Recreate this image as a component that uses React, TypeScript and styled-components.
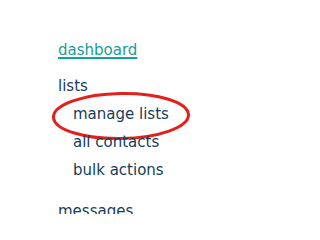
import React from 'react';
import styled, {createGlobalStyle} from 'styled-components';

const GlobalStyle = createGlobalStyle`
    html, body {
        margin: 0;
        padding: 0;
        background: #ffffff;
    }
    body {
        font-family: "DejaVu Sans", "Liberation Sans", sans-serif;
    }
`;

const Nav = styled.nav`
    width: 254px;
    height: 214px;
    overflow: hidden;
    box-sizing: border-box;
    padding: 36px 0 0 58px;
    font-size: 15px;
    line-height: 28px;
    color: #173d56;
`;

const Section = styled.div<{$gap: number}>`
    display: flex;
    flex-direction: column;
    margin-bottom: ${(p) => p.$gap}px;
`;

const TopLink = styled.a`
    color: #17a097;
    text-decoration: underline;
    text-decoration-thickness: 1.5px;
    text-underline-offset: 2px;
`;

const Heading = styled.div`
    color: #173d56;
`;

const SubList = styled.div`
    display: flex;
    flex-direction: column;
    padding-left: 15px;
`;

const SubItem = styled.div`
    position: relative;
    width: max-content;
`;

const Circle = styled.svg`
    position: absolute;
    left: -23px;
    top: -10px;
    pointer-events: none;
`;

const Marker = () => (
    <Circle width='142' height='52' viewBox='0 0 142 52'>
        <ellipse
            cx='71'
            cy='26'
            rx='67.5'
            ry='22.5'
            fill='none'
            stroke='#e3211c'
            strokeWidth='3'
            transform='rotate(-1 71 26)'
        />
    </Circle>
);

const App = () => {
    return (
        <>
            <GlobalStyle/>
            <Nav>
                <Section $gap={8}>
                    <TopLink>{'dashboard'}</TopLink>
                </Section>
                <Section $gap={13}>
                    <Heading>{'lists'}</Heading>
                    <SubList>
                        <SubItem>{'manage lists'}<Marker/></SubItem>
                        <SubItem>{'all contacts'}</SubItem>
                        <SubItem>{'bulk actions'}</SubItem>
                    </SubList>
                </Section>
                <Section $gap={0}>
                    <Heading>{'messages'}</Heading>
                </Section>
            </Nav>
        </>
    );
};

export default App;
